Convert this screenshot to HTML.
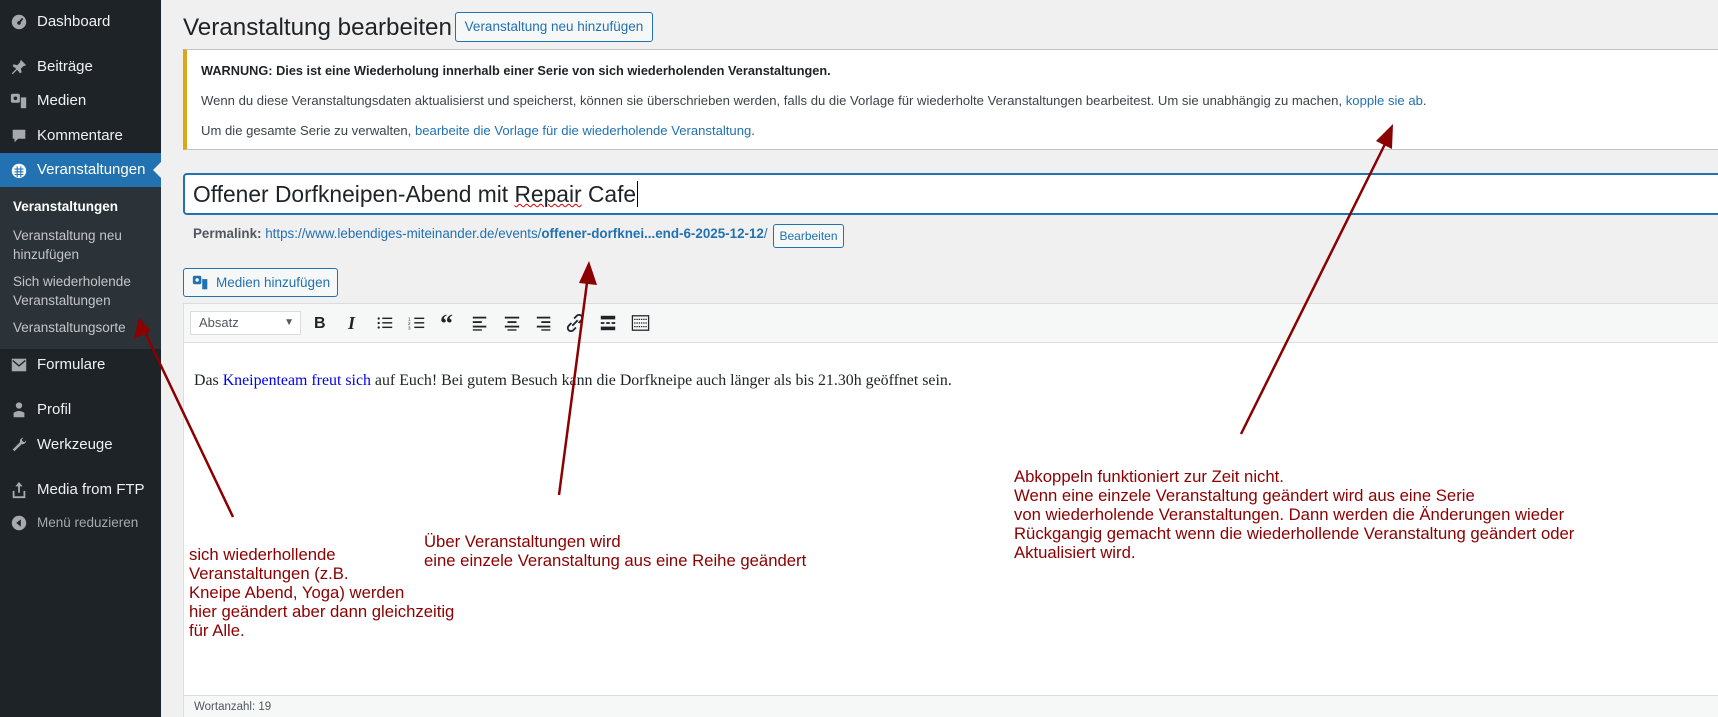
<!DOCTYPE html>
<html><head><meta charset="utf-8"><style>
*{box-sizing:border-box;margin:0;padding:0}
body{width:1718px;height:717px;overflow:hidden;background:#f0f0f1;font-family:"Liberation Sans",sans-serif;position:relative;color:#3c434a}
.abs{position:absolute;white-space:nowrap}
#side{position:absolute;left:0;top:0;width:161px;height:717px;background:#1d2327}
.mi{position:absolute;left:37px;color:#f0f0f1;font-size:15px;line-height:20px}
.ic{position:absolute;left:10px;width:18px;height:18px}
.sub{position:absolute;left:13px;color:#c3c4c7;font-size:13.5px;line-height:19px}
.btn{position:absolute;border:1px solid #2271b1;color:#2271b1;background:#f6f7f7;border-radius:3px;font-size:13.5px;white-space:nowrap}
.ann{position:absolute;color:#8b0000;font-size:16.7px;line-height:19px;white-space:nowrap}
.tb{position:absolute;top:315px;font-size:16px;color:#1d2327;font-weight:bold}
a{color:#2271b1}
</style></head><body>
<div id="side">
 <svg class="ic" style="top:13px" viewBox="0 0 20 20"><circle cx="10" cy="10" r="8" fill="#a7aaad"/><circle cx="10" cy="11" r="2" fill="#1d2327"/><path d="M10 11 L14 6" stroke="#1d2327" stroke-width="2"/></svg>
 <div class="mi" style="top:12px">Dashboard</div>
 <svg class="ic" style="top:58px" viewBox="0 0 20 20"><path d="M12 2l6 6-3 1-3 3 1 4-2 1-3-4-5 5-1-1 5-5-4-3 1-2 4 1 3-3z" fill="#a7aaad"/></svg>
 <div class="mi" style="top:57px">Beiträge</div>
 <svg class="ic" style="top:92px" viewBox="0 0 20 20"><rect x="1" y="2" width="10" height="10" rx="2" fill="#a7aaad"/><rect x="12" y="6" width="6" height="12" fill="#a7aaad"/><circle cx="6" cy="7" r="2" fill="#1d2327"/></svg>
 <div class="mi" style="top:91px">Medien</div>
 <svg class="ic" style="top:127px" viewBox="0 0 20 20"><path d="M3 3h14v10H9l-4 4v-4H3z" fill="#a7aaad"/></svg>
 <div class="mi" style="top:126px">Kommentare</div>
 <div style="position:absolute;left:0;top:153px;width:161px;height:34px;background:#2271b1"></div>
 <div style="position:absolute;left:153px;top:162px;width:0;height:0;border-top:8px solid transparent;border-bottom:8px solid transparent;border-right:8px solid #f0f0f1"></div>
 <svg class="ic" style="top:161px" viewBox="0 0 20 20"><circle cx="10" cy="11" r="8" fill="#fff"/><path d="M5 9h10M5 12h10M5 15h10M8 6v12M12 6v12" stroke="#2271b1" stroke-width="1.2"/></svg>
 <div class="mi" style="top:160px;color:#fff">Veranstaltungen</div>
 <div style="position:absolute;left:0;top:187px;width:161px;height:162px;background:#2c3338"></div>
 <div class="sub" style="top:197px;color:#fff;font-weight:bold">Veranstaltungen</div>
 <div class="sub" style="top:226px">Veranstaltung neu<br>hinzufügen</div>
 <div class="sub" style="top:272px">Sich wiederholende<br>Veranstaltungen</div>
 <div class="sub" style="top:318px">Veranstaltungsorte</div>
 <svg class="ic" style="top:356px" viewBox="0 0 20 20"><rect x="2" y="3" width="16" height="14" fill="#a7aaad"/><path d="M3 5l7 6 7-6" stroke="#1d2327" stroke-width="1.5" fill="none"/></svg>
 <div class="mi" style="top:355px">Formulare</div>
 <svg class="ic" style="top:401px" viewBox="0 0 20 20"><circle cx="10" cy="5" r="3.5" fill="#a7aaad"/><path d="M4 18v-5q6-4 12 0v5z" fill="#a7aaad"/></svg>
 <div class="mi" style="top:400px">Profil</div>
 <svg class="ic" style="top:436px" viewBox="0 0 20 20"><path d="M15 2a4 4 0 0 0-4 5L3 15l2 2 8-8a4 4 0 0 0 5-4l-2 2-2-1-1-2z" fill="#a7aaad"/></svg>
 <div class="mi" style="top:435px">Werkzeuge</div>
 <svg class="ic" style="top:481px" viewBox="0 0 20 20"><path d="M10 1l4 5h-3v7H9V6H6z" fill="#a7aaad"/><path d="M4 11v7h12v-7" stroke="#a7aaad" stroke-width="2" fill="none"/></svg>
 <div class="mi" style="top:480px">Media from FTP</div>
 <svg class="ic" style="top:514px" viewBox="0 0 20 20"><circle cx="10" cy="10" r="8" fill="#a7aaad"/><path d="M12 6l-5 4 5 4z" fill="#1d2327"/></svg>
 <div class="mi" style="top:513px;color:#a7aaad;font-size:13.5px">Menü reduzieren</div>
</div>

<div class="abs" style="left:183px;top:13px;font-size:24.2px;color:#1d2327;line-height:30px">Veranstaltung bearbeiten</div>
<div class="btn" style="left:455px;top:12px;width:198px;height:30px;line-height:28px;text-align:center">Veranstaltung neu hinzufügen</div>

<div style="position:absolute;left:183px;top:49px;width:1560px;height:101px;background:#fff;border:1px solid #c3c4c7;border-left:4px solid #dba617"></div>
<div class="abs" style="left:201px;top:63px;font-size:12.75px;font-weight:bold;color:#1d2327">WARNUNG: Dies ist eine Wiederholung innerhalb einer Serie von sich wiederholenden Veranstaltungen.</div>
<div class="abs" style="left:201px;top:93px;font-size:13.1px">Wenn du diese Veranstaltungsdaten aktualisierst und speicherst, können sie überschrieben werden, falls du die Vorlage für wiederholte Veranstaltungen bearbeitest. Um sie unabhängig zu machen, <a>kopple sie ab</a>.</div>
<div class="abs" style="left:201px;top:123px;font-size:13.1px">Um die gesamte Serie zu verwalten, <a>bearbeite die Vorlage für die wiederholende Veranstaltung</a>.</div>

<div style="position:absolute;left:183px;top:173px;width:1560px;height:42px;background:#fff;border:2px solid #2271b1;border-radius:4px"></div>
<div class="abs" style="left:193px;top:180px;font-size:22.8px;color:#1d2327;line-height:28px">Offener Dorfkneipen-Abend mit <span style="text-decoration:underline wavy #d00;text-decoration-thickness:1px">Repair</span> Cafe<span style="border-left:1.5px solid #000;margin-left:1px"></span></div>

<div class="abs" style="left:193px;top:226px;font-size:13.4px;color:#50575e"><b>Permalink:</b> <a>https://www.lebendiges-miteinander.de/events/<b>offener-dorfknei...end-6-2025-12-12</b>/</a></div>
<div class="btn" style="left:773px;top:224px;width:71px;height:24px;line-height:22px;text-align:center;font-size:12px">Bearbeiten</div>

<div class="btn" style="left:183px;top:268px;width:155px;height:29px;line-height:27px;padding-left:32px">Medien hinzufügen</div>
<svg style="position:absolute;left:192px;top:274px" width="17" height="17" viewBox="0 0 20 20"><rect x="1" y="2" width="10" height="10" rx="2" fill="#2271b1"/><rect x="12" y="6" width="6" height="12" fill="#2271b1"/><circle cx="6" cy="7" r="2" fill="#f6f7f7"/></svg>

<div style="position:absolute;left:183px;top:303px;width:1560px;height:414px;background:#fff;border:1px solid #dcdcde"></div>
<div style="position:absolute;left:184px;top:304px;width:1560px;height:39px;background:#f6f7f7;border-bottom:1px solid #dcdcde"></div>
<div style="position:absolute;left:190px;top:311px;width:111px;height:24px;background:#fff;border:1px solid #dcdcde;font-size:13px;line-height:22px;padding-left:8px;color:#50575e">Absatz<span style="position:absolute;right:6px;font-size:10px">▼</span></div>
<div class="tb" style="left:314px;font-family:'Liberation Sans'">B</div>
<div class="tb" style="left:348px;font-style:italic;font-family:'Liberation Serif';font-size:18px;top:313px">I</div>
<svg style="position:absolute;left:376px;top:314px" width="18" height="18" viewBox="0 0 20 20" fill="#1d2327"><circle cx="3" cy="5" r="1.3"/><circle cx="3" cy="10" r="1.3"/><circle cx="3" cy="15" r="1.3"/><rect x="7" y="4" width="11" height="1.6"/><rect x="7" y="9" width="11" height="1.6"/><rect x="7" y="14" width="11" height="1.6"/></svg>
<svg style="position:absolute;left:408px;top:314px" width="18" height="18" viewBox="0 0 20 20" fill="#1d2327"><text x="0" y="7" font-size="5">1</text><text x="0" y="12" font-size="5">2</text><text x="0" y="17" font-size="5">3</text><rect x="7" y="4" width="11" height="1.6"/><rect x="7" y="9" width="11" height="1.6"/><rect x="7" y="14" width="11" height="1.6"/></svg>
<div class="tb" style="left:440px;font-family:'Liberation Serif';font-size:26px;top:309px">“</div>
<svg style="position:absolute;left:471px;top:314px" width="18" height="18" viewBox="0 0 20 20" fill="#1d2327"><rect x="2" y="3" width="15" height="2"/><rect x="2" y="8" width="10" height="2"/><rect x="2" y="13" width="15" height="2"/><rect x="2" y="17" width="10" height="1.5"/></svg>
<svg style="position:absolute;left:503px;top:314px" width="18" height="18" viewBox="0 0 20 20" fill="#1d2327"><rect x="2" y="3" width="16" height="2"/><rect x="5" y="8" width="10" height="2"/><rect x="2" y="13" width="16" height="2"/><rect x="5" y="17" width="10" height="1.5"/></svg>
<svg style="position:absolute;left:535px;top:314px" width="18" height="18" viewBox="0 0 20 20" fill="#1d2327"><rect x="2" y="3" width="15" height="2"/><rect x="7" y="8" width="10" height="2"/><rect x="2" y="13" width="15" height="2"/><rect x="7" y="17" width="10" height="1.5"/></svg>
<svg style="position:absolute;left:566px;top:314px" width="18" height="18" viewBox="0 0 20 20" fill="none" stroke="#1d2327" stroke-width="2"><path d="M9 5l3-3a3 3 0 0 1 5 5l-3 3M11 15l-3 3a3 3 0 0 1-5-5l3-3M7 13l6-6"/></svg>
<svg style="position:absolute;left:599px;top:314px" width="18" height="18" viewBox="0 0 20 20" fill="#1d2327"><rect x="2" y="2" width="16" height="4"/><rect x="2" y="9" width="4" height="2"/><rect x="8" y="9" width="4" height="2"/><rect x="14" y="9" width="4" height="2"/><rect x="2" y="14" width="16" height="4"/></svg>
<svg style="position:absolute;left:631px;top:314px" width="19" height="18" viewBox="0 0 20 20" fill="none" stroke="#1d2327" stroke-width="1.4"><rect x="1" y="2" width="18" height="16"/><path d="M3 6h14M3 10h14M3 14h14" stroke-dasharray="1.5 1"/></svg>

<div class="abs" style="left:194px;top:372px;font-family:'Liberation Serif',serif;font-size:15.9px;color:#1d2327">Das <a style="color:#00e">Kneipenteam freut sich</a> auf Euch! Bei gutem Besuch kann die Dorfkneipe auch länger als bis 21.30h geöffnet sein.</div>

<div style="position:absolute;left:184px;top:695px;width:1560px;height:22px;background:#f6f7f7;border-top:1px solid #dcdcde"></div>
<div class="abs" style="left:194px;top:701px;font-size:11.5px;color:#50575e">Wortanzahl: 19</div>

<div class="ann" style="left:189px;top:545px">sich wiederhollende<br>Veranstaltungen (z.B.<br>Kneipe Abend, Yoga) werden<br>hier geändert aber dann gleichzeitig<br>für Alle.</div>
<div class="ann" style="left:424px;top:532px">Über Veranstaltungen wird<br>eine einzele Veranstaltung aus eine Reihe geändert</div>
<div class="ann" style="left:1014px;top:467px">Abkoppeln funktioniert zur Zeit nicht.<br>Wenn eine einzele Veranstaltung geändert wird aus eine Serie<br>von wiederholende Veranstaltungen. Dann werden die Änderungen wieder<br>Rückgangig gemacht wenn die wiederhollende Veranstaltung geändert oder<br>Aktualisiert wird.</div>

<svg style="position:absolute;left:0;top:0" width="1718" height="717">
<g stroke="#8b0000" stroke-width="2.5" fill="#8b0000">
<line x1="233" y1="517" x2="143" y2="328"/><polygon points="139,318 134,339 151,331" stroke="none"/>
<line x1="559" y1="495" x2="588" y2="275"/><polygon points="589,261 579,283 597,285" stroke="none"/>
<line x1="1241" y1="434" x2="1388" y2="138"/><polygon points="1393,124 1376,141 1392,149" stroke="none"/>
</g></svg>
</body></html>
